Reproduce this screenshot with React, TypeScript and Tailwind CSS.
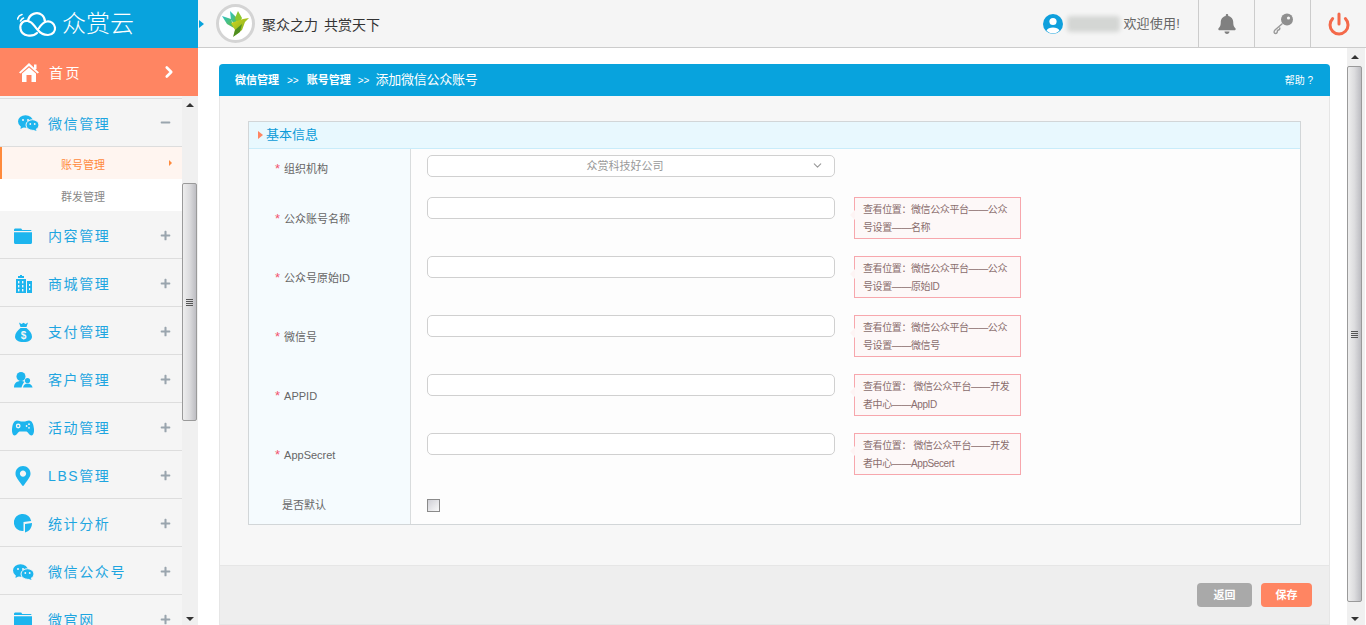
import type { ReactNode } from 'react';
import { ChevronRight, ChevronDown, Power } from 'lucide-react';
import { FaMapMarkerAlt, FaPlus, FaMinus, FaBell } from 'react-icons/fa';

function WechatIcon() {
  return (
    <svg width="21" height="16" viewBox="0 0 21 16" fill="currentColor">
      <ellipse cx="7.5" cy="6.5" rx="7.5" ry="6.2" />
      <path d="M3 10 L2.5 14 L7 11.5Z" />
      <ellipse cx="14.5" cy="10" rx="6.5" ry="5.3" stroke="#f5f5f5" strokeWidth="1" />
      <path d="M17.5 13.5 L18.5 16 L14.5 14.5Z" />
      <circle cx="5" cy="5" r="1" fill="#f5f5f5" />
      <circle cx="10" cy="5" r="1" fill="#f5f5f5" />
      <circle cx="12.3" cy="9" r="0.9" fill="#f5f5f5" />
      <circle cx="16.7" cy="9" r="0.9" fill="#f5f5f5" />
    </svg>
  );
}

function FolderIcon() {
  return (
    <svg width="18" height="16" viewBox="0 0 18 16" fill="currentColor">
      <path d="M0 2 C0 1 0.6 0.5 1.5 0.5 H6.5 C7.5 0.5 7.8 1.2 8.2 2 H16 C17 2 17.6 2.5 17.6 3 H0Z" />
      <path d="M0 4.2 H18 V14.5 C18 15.4 17.4 16 16.5 16 H1.5 C0.6 16 0 15.4 0 14.5Z" />
    </svg>
  );
}

function BuildingIcon() {
  return (
    <svg width="17" height="18" viewBox="0 0 17 18" fill="currentColor">
      <path d="M3 3 V1 H5 V0 H7 V1 H9 V3Z" />
      <rect x="1" y="4" width="10" height="14" />
      <rect x="12" y="6" width="5" height="12" />
      <g fill="#f5f5f5">
        <rect x="3" y="6" width="1.4" height="2.4" />
        <rect x="7" y="6" width="1.4" height="2.4" />
        <rect x="3" y="10" width="1.4" height="2.4" />
        <rect x="7" y="10" width="1.4" height="2.4" />
        <rect x="3" y="14" width="1.4" height="2.4" />
        <rect x="7" y="14" width="1.4" height="2.4" />
        <rect x="14" y="9" width="1.2" height="2" />
        <rect x="14" y="13" width="1.2" height="2" />
      </g>
    </svg>
  );
}

function MoneyBagIcon() {
  return (
    <svg width="17" height="20" viewBox="0 0 17 20" fill="currentColor">
      <path d="M4 0.5 L6.5 2 L8.5 0.8 L10.5 2 L13 0.5 L11.5 5 H5.5Z" />
      <path d="M5.5 6 H11.5 C14.5 8.5 17 11.5 17 14.5 C17 18 14 20 8.5 20 C3 20 0 18 0 14.5 C0 11.5 2.5 8.5 5.5 6Z" />
      <text x="8.5" y="17" textAnchor="middle" fontSize="10" fontWeight="700" fill="#f5f5f5">$</text>
    </svg>
  );
}

function CustomerIcon() {
  return (
    <svg width="19" height="16" viewBox="0 0 19 16" fill="currentColor">
      <circle cx="7" cy="4.5" r="4.5" />
      <path d="M0 15.5 C0 11 3 9 7 9 C8.5 9 9.5 9.3 10.5 9.8 C9 11.5 8 13.5 7.5 15.5Z" />
      <circle cx="13.5" cy="8.5" r="2.6" />
      <path d="M9 15.5 C9.5 12.8 11.3 11.6 13.5 11.6 C15.8 11.6 18 12.8 18.6 15.5Z" />
    </svg>
  );
}

function GamepadIcon() {
  return (
    <svg width="22" height="16" viewBox="0 0 22 16" fill="currentColor">
      <path d="M5 0.5 C7 0.5 8 1.5 9 1.5 H13 C14 1.5 15 0.5 17 0.5 C20 0.5 21.5 4 22 9 C22.3 13 21 15.5 19.3 15.5 C17.5 15.5 16.5 12.5 14.5 11.5 H7.5 C5.5 12.5 4.5 15.5 2.7 15.5 C1 15.5 -0.3 13 0 9 C0.5 4 2 0.5 5 0.5Z" />
      <circle cx="6.2" cy="6" r="2.4" fill="#f5f5f5" />
      <circle cx="6.2" cy="6" r="1.1" />
      <circle cx="14.6" cy="6" r="0.9" fill="#f5f5f5" />
      <circle cx="17" cy="4.2" r="0.9" fill="#f5f5f5" />
      <circle cx="17" cy="7.8" r="0.9" fill="#f5f5f5" />
    </svg>
  );
}

function PieIcon() {
  return (
    <svg width="18" height="19" viewBox="0 0 18 19" fill="currentColor">
      <path d="M9 0 A8.5 8.5 0 0 1 17.2 7 L9.5 8 V16.9 A8.5 8.5 0 1 1 9 0Z" />
      <path d="M11 10 L18 9 C18 13 16 17 11 18.5Z" />
    </svg>
  );
}

function HomeIcon() {
  return (
    <svg width="20" height="19" viewBox="0 0 20 19" fill="white">
      <path d="M10 0 L20 9.5 L18.5 10.5 L10 3 L1.5 10.5 L0 9.5Z" />
      <path d="M3 10.5 L10 4.5 L17 10.5 V19 H12.5 V12 H7.5 V19 H3Z" />
      <rect x="15" y="1.5" width="2.5" height="4.5" />
    </svg>
  );
}

const menuItems: { label: string; icon: ReactNode }[] = [
  { label: '内容管理', icon: <FolderIcon /> },
  { label: '商城管理', icon: <BuildingIcon /> },
  { label: '支付管理', icon: <MoneyBagIcon /> },
  { label: '客户管理', icon: <CustomerIcon /> },
  { label: '活动管理', icon: <GamepadIcon /> },
  { label: 'LBS管理', icon: <FaMapMarkerAlt size={20} /> },
  { label: '统计分析', icon: <PieIcon /> },
  { label: '微信公众号', icon: <WechatIcon /> },
  { label: '微官网', icon: <FolderIcon /> },
];

const fields = [
  { label: '公众账号名称', tip: ['查看位置：微信公众平台——公众', '号设置——名称'] },
  { label: '公众号原始ID', tip: ['查看位置：微信公众平台——公众', '号设置——原始ID'] },
  { label: '微信号', tip: ['查看位置：微信公众平台——公众', '号设置——微信号'] },
  { label: 'APPID', tip: ['查看位置： 微信公众平台——开发', '者中心——AppID'] },
  { label: 'AppSecret', tip: ['查看位置： 微信公众平台——开发', '者中心——AppSecert'] },
];

function Logo() {
  return (
    <svg width="40" height="28" viewBox="0 0 40 28" fill="none" stroke="white" strokeWidth="2.2" strokeLinecap="round">
      <path d="M20 23 C16 27 5 27 3.5 19 C2.5 13 7 10 11 11 C12 4 20 1 25 5 C28 7.5 28 10 28 12" />
      <path d="M11 11 C16 12 17 16 20 19 C23 23 26 25 31 25 C36 25 38.5 21 38 17.5 C37.5 13.5 34 11 30 11.5 C26 12 24 15 22 18" />
      <path d="M0.5 9 C1 7 3 5 5 4.5" strokeWidth="1.6" />
      <path d="M3.5 11 C4 10 5 8.5 6.5 8" strokeWidth="1.6" />
    </svg>
  );
}

function Bird() {
  return (
    <div className="flex h-[39px] w-[39px] items-center justify-center rounded-full border-[3px] border-[#d4d4d4] bg-white">
      <svg width="30" height="28" viewBox="0 0 30 28">
        <defs>
          <linearGradient id="birdBody" x1="0" y1="0" x2="1" y2="1">
            <stop offset="0" stopColor="#d8d820" />
            <stop offset="1" stopColor="#6ea51e" />
          </linearGradient>
          <linearGradient id="birdWing" x1="0" y1="0" x2="1" y2="1">
            <stop offset="0" stopColor="#2cc4c8" />
            <stop offset="1" stopColor="#66bb3a" />
          </linearGradient>
        </defs>
        <polygon points="1,6 10,9 13,18 6,14" fill="url(#birdWing)" />
        <polygon points="9,1 15,7 16,17 10,10" fill="url(#birdWing)" />
        <polygon points="17,1 21,8 17,16 14,8" fill="#8ec72e" />
        <polygon points="10,13 22,9 28,8 24,12 21,20 13,26 14,20" fill="url(#birdBody)" />
        <polygon points="14,20 21,14 19,22 12,27" fill="#4f8f1f" />
      </svg>
    </div>
  );
}

function UserAvatar() {
  return (
    <svg width="20" height="20" viewBox="0 0 20 20">
      <circle cx="10" cy="10" r="10" fill="#0e9fdc" />
      <circle cx="10" cy="7.5" r="3.6" fill="white" />
      <path d="M3.5 16.5 C5 12.5 15 12.5 16.5 16.5 C13 20.5 7 20.5 3.5 16.5Z" fill="white" />
    </svg>
  );
}

function KeyIcon() {
  return (
    <svg width="22" height="22" viewBox="0 0 22 22" fill="none">
      <circle cx="15" cy="6.5" r="6" fill="#8f8f8f" />
      <circle cx="16.5" cy="5" r="1.6" fill="#f5f5f5" />
      <path d="M10.5 10.5 L3 17 C1.5 18.5 2 20.5 3.5 20.5 C5 20.5 5.5 19 5.5 17.5 L7.5 16.5 L8 14.5" stroke="#999" strokeWidth="1.4" />
    </svg>
  );
}

function ScrollBar({ thumbTop, thumbHeight, className }: { thumbTop: string; thumbHeight: string; className: string }) {
  return (
    <div className={`flex flex-col items-center bg-[#f0f0f0] ${className}`}>
      <div className="flex h-[18px] shrink-0 items-center justify-center">
        <div className="border-x-[4px] border-b-[4px] border-x-transparent border-b-[#333]" />
      </div>
      <div className={`flex w-full shrink-0 items-center justify-center rounded-[2px] border border-[#9a9a9a] bg-linear-to-r from-[#eeeeee] via-[#dcdcde] to-[#bdbdc2] ${thumbTop} ${thumbHeight}`}>
        <div className="flex w-[7px] flex-col gap-[1px]">
          <div className="h-px bg-[#555]" />
          <div className="h-px bg-[#555]" />
          <div className="h-px bg-[#555]" />
          <div className="h-px bg-[#555]" />
        </div>
      </div>
      <div className="mt-auto flex h-[12px] shrink-0 items-center justify-center">
        <div className="border-x-[4px] border-t-[4px] border-x-transparent border-t-[#333]" />
      </div>
    </div>
  );
}

function Sidebar() {
  return (
    <aside className="flex w-[198px] shrink-0 flex-col overflow-hidden bg-[#f0f0f0]">
      <div className="flex h-[48px] shrink-0 items-center bg-[#ff8562] pl-[19px] pr-[20px] text-white">
        <HomeIcon />
        <span className="ml-[10px] flex-1 pt-[2px] text-[14px] tracking-[2.5px]">首页</span>
        <ChevronRight size={18} strokeWidth={3.5} />
      </div>
      <div className="flex min-h-0 flex-1">
        <div className="w-[182px] shrink-0 overflow-hidden bg-[#f5f5f5] pt-[2px]">
          <div className="flex h-[49px] items-center border-y border-[#dddddd] pl-[18px] pr-[11px] text-[#1ea5e0]">
            <span className="flex w-[30px] pt-[1px] text-[#1db5ee]">
              <WechatIcon />
            </span>
            <span className="flex-1 pt-[4px] text-[14px] tracking-[1.6px]">微信管理</span>
            <FaMinus size={11} className="text-[#9aa5ae]" />
          </div>
          <div className="flex h-[32px] items-center border-l-2 border-[#ff8a3c] bg-[#fff5f0] pl-[59px] pr-[10px] text-[11px] text-[#ff8a3c]">
            <span className="flex-1 pt-[4px]">账号管理</span>
            <div className="border-y-[3px] border-l-[3px] border-y-transparent border-l-[#ff8a3c]" />
          </div>
          <div className="flex h-[32px] items-center bg-white pl-[61px] pt-[5px] text-[11px] text-[#888888]">群发管理</div>
          {menuItems.map((item) => (
            <div key={item.label} className="flex h-[48px] items-center border-b border-[#dddddd] pr-[11px] text-[#1ea5e0]">
              <span className="flex w-[48px] justify-center pl-[9px] pr-[11px] pt-[2px] text-[#1db5ee]">{item.icon}</span>
              <span className="flex-1 pt-[4px] text-[14px] tracking-[1.6px]">{item.label}</span>
              <FaPlus size={11} className="mt-[2px] text-[#9aa5ae]" />
            </div>
          ))}
        </div>
        <ScrollBar className="w-[15px]" thumbTop="mt-[69px]" thumbHeight="h-[238px]" />
      </div>
    </aside>
  );
}

function Header() {
  return (
    <header className="flex h-[48px] shrink-0">
      <div className="flex w-[198px] shrink-0 items-center bg-[#08a3dd] pl-[17px] pb-[1px] text-white">
        <Logo />
        <span className="ml-[5px] text-[24px] font-light leading-none">众赏云</span>
      </div>
      <div className="flex flex-1 items-center border-b border-[#cccccc] bg-[#f5f5f5]">
        <div className="ml-px border-y-[4px] border-l-[5px] border-y-transparent border-l-[#08a3dd]" />
        <div className="ml-[12px]">
          <Bird />
        </div>
        <span className="ml-[7px] pt-[3px] text-[14px] text-[#333333] [word-spacing:2px]">聚众之力 共赏天下</span>
        <div className="ml-auto flex items-center">
          <UserAvatar />
          <div className="ml-[4px] h-[16px] w-[53px] rounded-sm bg-[#d4d6d4] blur-[2px]" />
          <span className="ml-[3px] mr-[18px] text-[13px] tracking-[0.2px] text-[#666666]">欢迎使用!</span>
        </div>
        <div className="flex h-[47px] w-[56px] items-center justify-center border-l border-[#cccccc] text-[#808080]">
          <FaBell size={20} />
        </div>
        <div className="flex h-[47px] w-[56px] items-center justify-center border-l border-[#cccccc]">
          <KeyIcon />
        </div>
        <div className="flex h-[47px] w-[56px] items-center justify-center border-l border-[#cccccc] text-[#f4694a]">
          <Power size={24} strokeWidth={3} />
        </div>
      </div>
    </header>
  );
}

function Tip({ lines }: { lines: string[] }) {
  return (
    <div className="relative ml-[19px] h-[42px] w-[167px] border border-[#f7a7ad] bg-[#fdf8f8] pl-[8px] pt-[3px] text-[10px] leading-[18px] tracking-[-0.4px] text-[#8a6d6d]">
      <div className="absolute left-[-5px] top-[12px] border-y-[5px] border-r-[5px] border-y-transparent border-r-[#fdf4f4]" />
      {lines.map((line) => (
        <div key={line} className="whitespace-nowrap">{line}</div>
      ))}
    </div>
  );
}

function Star() {
  return <span className="mr-[4px] text-[13px] leading-none text-[#f2536e]">*</span>;
}

function FormTable() {
  return (
    <div className="ml-[28px] mr-[28px] mt-[25px] border border-[#d2d6d8] bg-white">
      <div className="flex h-[27px] items-center border-b border-[#c9ecfa] bg-[#e8f8fe] pl-[9px] text-[13px] text-[#0b9bd8]">
        <div className="mr-[3px] border-y-[4px] border-l-[5px] border-y-transparent border-l-[#ff8562]" />
        基本信息
      </div>
      <div className="flex h-[38px] text-[11px] text-[#666666]">
        <div className="w-[162px] shrink-0 border-r border-[#d9dcdd] bg-[#f5fbfe] pl-[26px] pt-[12px] leading-[16px]">
          <Star />组织机构
        </div>
        <div className="flex-1 bg-[#fdfdfd] pl-[16px] pt-[6px]">
          <div className="relative flex h-[22px] w-[408px] items-center justify-center rounded-[5px] border border-[#d0d0d0] bg-white pr-[12px] text-[#999999]">
            众赏科技好公司
            <ChevronDown size={13} className="absolute right-[10px] top-[3px] text-[#999999]" />
          </div>
        </div>
      </div>
      {fields.map((field) => (
        <div key={field.label} className="flex h-[59px] text-[11px] text-[#666666]">
          <div className="w-[162px] shrink-0 border-r border-[#d9dcdd] bg-[#f5fbfe] pl-[26px] pt-[24px] leading-[16px]">
            <Star />{field.label}
          </div>
          <div className="flex flex-1 items-start bg-[#fdfdfd] pl-[16px] pt-[10px]">
            <input type="text" className="h-[22px] w-[408px] rounded-[5px] border border-[#d0d0d0] bg-white" />
            <Tip lines={field.tip} />
          </div>
        </div>
      ))}
      <div className="flex h-[42px] text-[11px] text-[#666666]">
        <div className="w-[162px] shrink-0 border-r border-[#d9dcdd] bg-[#f5fbfe] pl-[33px] pt-[15px] leading-[16px]">是否默认</div>
        <div className="flex-1 bg-[#fdfdfd] pl-[16px] pt-[17px]">
          <input
            type="checkbox"
            className="block h-[13px] w-[13px] appearance-none border border-[#8a8a8a] bg-linear-to-br from-[#d0d0d6] to-[#fafafa]"
          />
        </div>
      </div>
    </div>
  );
}

export default function App() {
  return (
    <div className="flex h-screen flex-col overflow-hidden bg-white font-['Liberation_Sans','Noto_Sans_CJK_SC',sans-serif]">
      <Header />
      <div className="flex min-h-0 flex-1">
        <Sidebar />
        <main className="flex min-w-0 flex-1 flex-col pl-[21px] pr-[17px] pt-[16px]">
          <div className="flex h-[32px] shrink-0 items-center rounded-t-[4px] bg-[#08a3dd] pl-[16px] pr-[17px] text-white">
            <span className="text-[11px] font-bold">微信管理</span>
            <span className="mx-[8px] text-[10px]">&gt;&gt;</span>
            <span className="text-[11px] font-bold">账号管理</span>
            <span className="ml-[7px] mr-[6px] text-[10px]">&gt;&gt;</span>
            <span className="text-[13px] tracking-[-0.25px]">添加微信公众账号</span>
            <span className="ml-auto text-[10px]">帮助 ?</span>
          </div>
          <div className="flex min-h-0 flex-1 flex-col border-x border-[#e6e6e6] bg-[#f7f7f7]">
            <FormTable />
            <div className="mt-auto flex h-[60px] items-start justify-end gap-[9px] border-y border-[#e6e6e6] bg-[#eeeeee] pr-[17px] pt-[17px] text-[11px] font-bold text-white">
              <button className="h-[24px] w-[55px] rounded-[4px] bg-[#a9a9a9]">返回</button>
              <button className="h-[24px] w-[51px] rounded-[4px] bg-[#ff8562]">保存</button>
            </div>
          </div>
        </main>
        <div className="w-[19px] shrink-0 border-r border-white bg-[#f0f0f0]">
          <ScrollBar className="h-full w-[15px]" thumbTop="" thumbHeight="h-[536px]" />
        </div>
      </div>
    </div>
  );
}
